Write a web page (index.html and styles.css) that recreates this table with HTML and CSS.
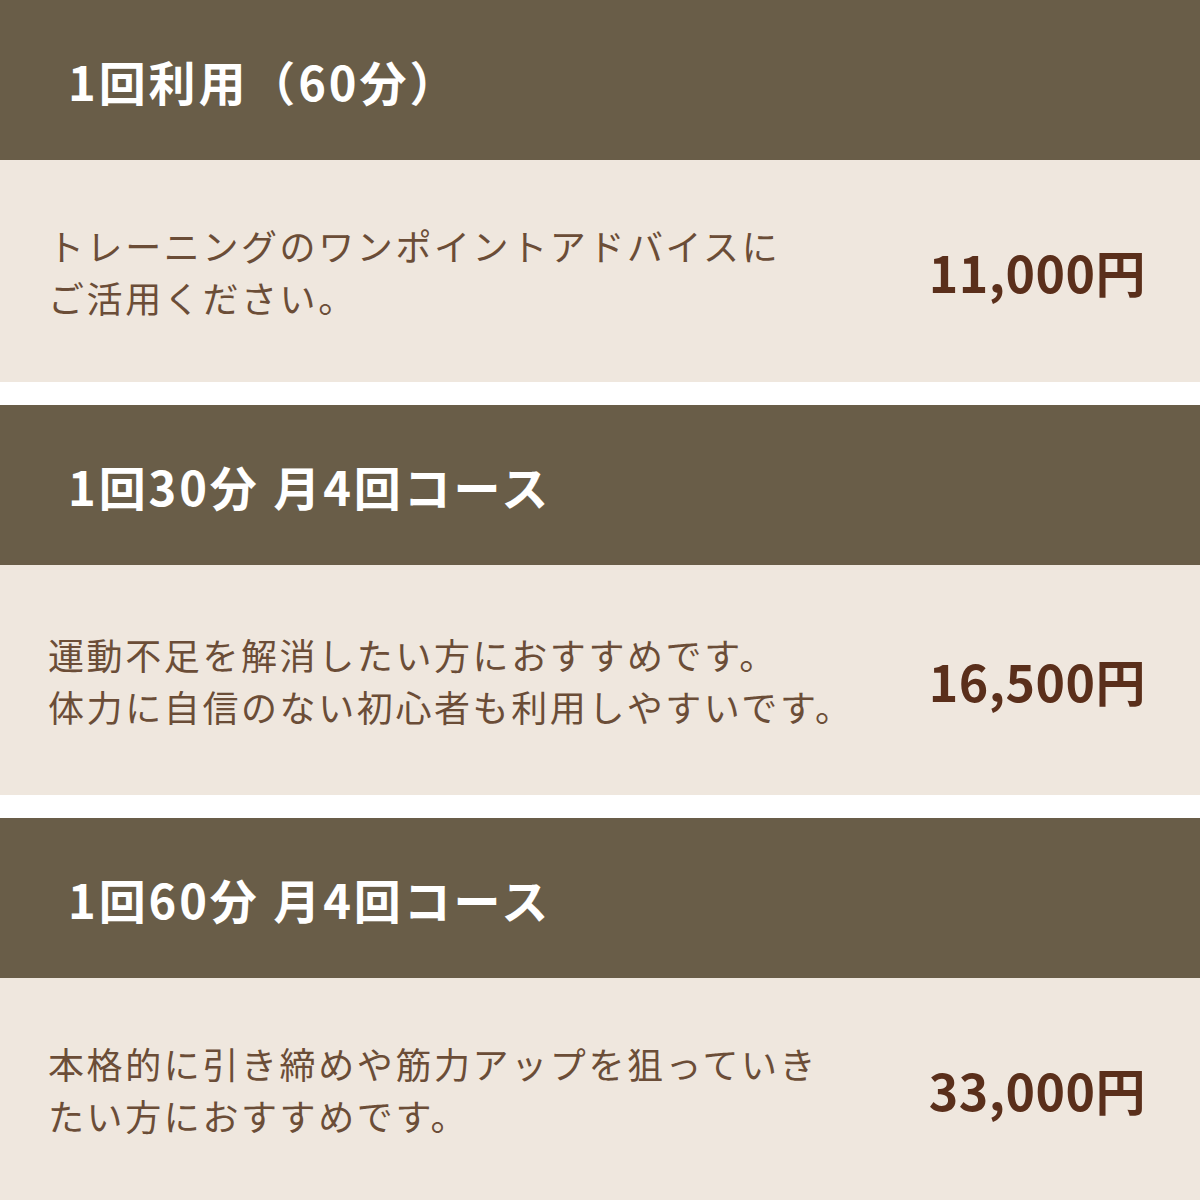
FILE: index.html
```html
<!DOCTYPE html>
<html lang="ja">
<head>
<meta charset="utf-8">
<link rel="stylesheet" href="styles.css">
</head>
<body>
<div class="plans">
  <section class="plan">
    <div class="plan-head">1回利用（60分）</div>
    <div class="plan-body b1">
      <p class="desc">トレーニングのワンポイントアドバイスに<br>ご活用ください。</p>
      <p class="price">11,000円</p>
    </div>
  </section>
  <section class="plan">
    <div class="plan-head">1回30分 月4回コース</div>
    <div class="plan-body b2">
      <p class="desc">運動不足を解消したい方におすすめです。<br>体力に自信のない初心者も利用しやすいです。</p>
      <p class="price">16,500円</p>
    </div>
  </section>
  <section class="plan">
    <div class="plan-head">1回60分 月4回コース</div>
    <div class="plan-body b3">
      <p class="desc">本格的に引き締めや筋力アップを狙っていき<br>たい方におすすめです。</p>
      <p class="price">33,000円</p>
    </div>
  </section>
</div>
</body>
</html>
```
FILE: styles.css
```css
html, body {
  margin: 0;
  padding: 0;
  background: #ffffff;
}
body {
  font-family: "Noto Sans CJK JP", "Noto Sans", sans-serif;
}
.plans {
  display: flex;
  flex-direction: column;
  gap: 23px;
  width: 1200px;
}
.plan-head {
  height: 160px;
  background: #695d48;
  color: #ffffff;
  font-weight: 700;
  font-size: 47px;
  letter-spacing: 2.9px;
  display: flex;
  align-items: center;
  padding-left: 68px;
  box-sizing: border-box;
}
.plan-body {
  background: #efe7de;
  display: flex;
  align-items: center;
  justify-content: space-between;
  padding: 0 54px 0 48px;
  box-sizing: border-box;
}
.b1 { height: 222px; }
.b2 { height: 230px; }
.b3 { height: 222px; }
.desc {
  margin: 0;
  color: #6b4d37;
  font-size: 36px;
  line-height: 52px;
  letter-spacing: 2.6px;
}
.price {
  margin: 0;
  color: #5a2f1b;
  font-weight: 700;
  font-size: 50px;
  letter-spacing: 0.5px;
}
```
